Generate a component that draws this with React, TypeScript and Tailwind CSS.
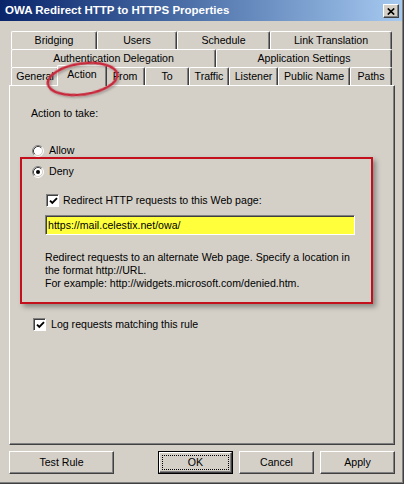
import React from 'react';

const Radio = ({ checked = false }: { checked?: boolean }) => (
  <svg width="12" height="12" viewBox="0 0 12 12" className="shrink-0">
    <circle cx="6" cy="6" r="5" fill="#ffffff" />
    <path d="M2.11 9.89 A5.5 5.5 0 0 1 9.89 2.11" fill="none" stroke="#808080" strokeWidth="1" />
    <path d="M2.82 9.18 A4.5 4.5 0 0 1 9.18 2.82" fill="none" stroke="#404040" strokeWidth="1" />
    <path d="M9.89 2.11 A5.5 5.5 0 0 1 2.11 9.89" fill="none" stroke="#ffffff" strokeWidth="1" />
    <path d="M9.18 2.82 A4.5 4.5 0 0 1 2.82 9.18" fill="none" stroke="#d4d0c8" strokeWidth="1" />
    {checked && <circle cx="6" cy="6" r="2" fill="#000000" />}
  </svg>
);

const Checkbox = () => (
  <div className="w-[13px] h-[13px] shrink-0 bg-white border border-t-[#808080] border-l-[#808080] border-b-white border-r-white shadow-[inset_1px_1px_0_#404040] flex items-center justify-center">
    <svg width="9" height="9" viewBox="0 0 9 9" className="ml-[1px] mt-[1px]">
      <path d="M1 3.6 L3.3 5.9 L8 1.2" fill="none" stroke="#000000" strokeWidth="1.9" />
    </svg>
  </div>
);

const Tab = ({ label, w }: { label: string; w: string }) => (
  <div
    className={`${w} h-[18px] shrink-0 border-l border-t border-r border-white border-r-[#404040] rounded-t-[2px] shadow-[inset_-1px_0_0_#808080] flex items-center justify-center whitespace-nowrap`}
  >
    {label}
  </div>
);

const Button = ({ label, w, ml, isDefault = false }: { label: string; w: string; ml: string; isDefault?: boolean }) =>
  isDefault ? (
    <div className={`${w} ${ml} h-[23px] border border-black`}>
      <div className="h-full border border-white border-r-[#404040] border-b-[#404040] shadow-[inset_-1px_-1px_0_#808080] p-[2px]">
        <div className="h-full border border-dotted border-black flex items-center justify-center">{label}</div>
      </div>
    </div>
  ) : (
    <div
      className={`${w} ${ml} h-[23px] border border-white border-r-[#404040] border-b-[#404040] shadow-[inset_-1px_-1px_0_#808080] flex items-center justify-center`}
    >
      {label}
    </div>
  );

export default function App() {
  return (
    <div className="w-[404px] h-[484px] bg-[#d4d0c8] border-r border-b border-[#404040] relative overflow-hidden font-['Liberation_Sans',Arial,sans-serif] text-[10.6px] leading-[13px] text-black">
      <div className="h-full border-r border-b border-[#808080] flex flex-col">
        {/* Title bar */}
        <div className="h-[21px] shrink-0 bg-linear-to-r from-[#0a246a] to-[#a6caf0] flex items-start justify-between pl-[5px] pr-[3px]">
          <span className="text-white font-bold text-[11.5px] leading-[21px] whitespace-nowrap">
            OWA Redirect HTTP to HTTPS Properties
          </span>
          <div className="mt-[4px] w-[16px] h-[14px] bg-[#d4d0c8] border border-white border-r-[#404040] border-b-[#404040] shadow-[inset_-1px_-1px_0_#808080] flex items-center justify-center">
            <svg width="8" height="7" viewBox="0 0 8 7">
              <path d="M0.8 0.5 L7.2 6.5 M7.2 0.5 L0.8 6.5" stroke="#000000" strokeWidth="1.7" fill="none" />
            </svg>
          </div>
        </div>

        {/* Tabs */}
        <div className="mt-[10px] ml-[11px] w-[381px] flex flex-col">
          <div className="flex h-[18px]">
            <Tab label="Bridging" w="w-[86px]" />
            <Tab label="Users" w="w-[80px]" />
            <Tab label="Schedule" w="w-[93px]" />
            <Tab label="Link Translation" w="w-[122px]" />
          </div>
          <div className="flex h-[18px]">
            <Tab label="Authentication Delegation" w="w-[205px]" />
            <Tab label="Application Settings" w="w-[176px]" />
          </div>
          <div className="flex items-start h-[18px]">
            <Tab label="General" w="w-[48px]" />
            <div className="relative z-10 w-[50px] h-[21px] -mt-[2px] -mx-[2px] shrink-0 bg-[#d4d0c8] border-l border-t border-r border-white border-r-[#404040] rounded-t-[2px] shadow-[inset_-1px_0_0_#808080] flex justify-center pt-[2px]">
              Action
            </div>
            <Tab label="From" w="w-[40px]" />
            <Tab label="To" w="w-[44px]" />
            <Tab label="Traffic" w="w-[40px]" />
            <Tab label="Listener" w="w-[49px]" />
            <Tab label="Public Name" w="w-[72px]" />
            <Tab label="Paths" w="w-[42px]" />
          </div>
        </div>

        {/* Panel */}
        <div className="ml-[9px] w-[386px] h-[360px] shrink-0 border border-white border-r-[#404040] border-b-[#404040] shadow-[inset_-1px_-1px_0_#808080] flex flex-col">
          <div className="ml-[21px] mt-[21px]">Action to take:</div>

          <div className="ml-[22px] mt-[24px] h-[13px] flex items-center">
            <Radio />
            <span className="ml-[5px]">Allow</span>
          </div>

          <div className="ml-[10px] w-[353px] h-[147px] border-2 border-[#c4101c] shadow-[3px_3px_5px_rgba(0,0,0,0.35)] flex flex-col">
            <div className="ml-[10px] mt-[6px] h-[13px] flex items-center">
              <Radio checked />
              <span className="ml-[5px]">Deny</span>
            </div>
            <div className="ml-[24px] mt-[16px] h-[13px] flex items-center">
              <Checkbox />
              <span className="ml-[4px]">Redirect HTTP requests to this Web page:</span>
            </div>
            <div className="ml-[23px] mt-[8px] w-[310px] h-[20px] bg-[#ffff3c] border border-t-[#808080] border-l-[#808080] border-b-white border-r-white shadow-[inset_1px_1px_0_#404040] flex items-center pl-[2px]">
              https://mail.celestix.net/owa/
            </div>
            <div className="ml-[23px] mt-[16px] whitespace-nowrap">
              <div>Redirect requests to an alternate Web page. Specify a location in</div>
              <div>the format http://URL.</div>
              <div>For example: http://widgets.microsoft.com/denied.htm.</div>
            </div>
          </div>

          <div className="ml-[23px] mt-[14px] h-[13px] flex items-center">
            <Checkbox />
            <span className="ml-[5px]">Log requests matching this rule</span>
          </div>
        </div>

        {/* Buttons */}
        <div className="mt-[6px] flex">
          <Button label="Test Rule" w="w-[105px]" ml="ml-[9px]" />
          <Button label="OK" w="w-[75px]" ml="ml-[44px]" isDefault />
          <Button label="Cancel" w="w-[75px]" ml="ml-[6px]" />
          <Button label="Apply" w="w-[75px]" ml="ml-[6px]" />
        </div>
      </div>

      {/* Annotation ellipse around the Action tab */}
      <svg className="absolute left-0 top-0 pointer-events-none z-20" width="404" height="120">
        <defs>
          <filter id="sh" x="-20%" y="-40%" width="140%" height="180%">
            <feDropShadow dx="1.5" dy="1.5" stdDeviation="1.2" floodColor="#000000" floodOpacity="0.3" />
          </filter>
        </defs>
        <ellipse
          cx="82.5"
          cy="79"
          rx="35"
          ry="15.5"
          transform="rotate(-8 82.5 79)"
          fill="none"
          stroke="#c8283a"
          strokeWidth="2.5"
          filter="url(#sh)"
        />
      </svg>
    </div>
  );
}
